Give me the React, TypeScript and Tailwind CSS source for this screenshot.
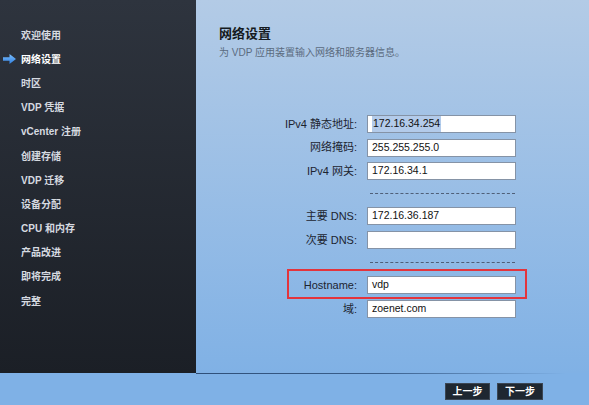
import React from "react";

const FONT = {
  fontFamily: '"Liberation Sans", Arial, "Noto Sans CJK SC", sans-serif',
};

const steps = [
  "欢迎使用",
  "网络设置",
  "时区",
  "VDP 凭据",
  "vCenter 注册",
  "创建存储",
  "VDP 迁移",
  "设备分配",
  "CPU 和内存",
  "产品改进",
  "即将完成",
  "完整",
];

function Arrow() {
  return (
    <svg width="13" height="10" viewBox="0 0 13 10" className="absolute left-[3px] top-[7px]">
      <defs>
        <linearGradient id="arr" x1="0" y1="0" x2="0" y2="1">
          <stop offset="0" stopColor="#7cc0ff" />
          <stop offset="1" stopColor="#2f7fe0" />
        </linearGradient>
      </defs>
      <path d="M0 3.2 H6.5 V0 L13 5 L6.5 10 V6.8 H0 Z" fill="url(#arr)" />
    </svg>
  );
}

function Sidebar() {
  return (
    <div className="w-[196px] h-full bg-gradient-to-b from-[#2e343e] to-[#1b1f26] pt-[23px]">
      {steps.map((s, i) => (
        <div key={s} className="relative h-[24.2px] flex items-center pl-[21px]">
          {i === 1 && <Arrow />}
          <span
            className={
              i === 1
                ? "text-[10px] font-bold text-white"
                : "text-[10px] font-bold text-[#d6dae0]"
            }
          >
            {s}
          </span>
        </div>
      ))}
    </div>
  );
}

function Field({
  label,
  value,
  selected,
}: {
  label: string;
  value: string;
  selected?: boolean;
}) {
  return (
    <div className="flex items-center h-[18px]">
      <div className="w-[171px] pr-[10px] text-right text-[11px] text-[#1c2430]">{label}</div>
      <div className="w-[149px] h-[18px] bg-white border border-[#8593a6] flex items-center pl-[4px] text-[10.5px] text-[#111]">
        {selected ? <span className="bg-[#b3cbea] px-[1px]">{value}</span> : value}
      </div>
    </div>
  );
}

function Divider() {
  return (
    <div className="h-[27px] flex items-center">
      <div className="ml-[174px] w-[145px] border-t border-dashed border-[#4f5f78]" />
    </div>
  );
}

function Main() {
  return (
    <div className="flex-1 h-full bg-gradient-to-b from-[#b3cbe6] to-[#80b1e5] flex flex-col">
      <div className="h-[115px] pl-[23px] pt-[25px]">
        <div className="text-[13px] font-bold text-[#151a20] leading-[18px]">网络设置</div>
        <div className="mt-[3px] text-[10px] text-[#5b6b7e] leading-[14px]">为 VDP 应用装置输入网络和服务器信息。</div>
      </div>
      <div className="flex flex-col">
        <div className="flex flex-col gap-[5.5px]">
          <Field label="IPv4 静态地址:" value="172.16.34.254" selected />
          <Field label="网络掩码:" value="255.255.255.0" />
          <Field label="IPv4 网关:" value="172.16.34.1" />
        </div>
        <Divider />
        <div className="flex flex-col gap-[6px]">
          <Field label="主要 DNS:" value="172.16.36.187" />
          <Field label="次要 DNS:" value="" />
        </div>
        <Divider />
        <div className="flex flex-col gap-[6px]">
          <div className="relative">
            <Field label="Hostname:" value="vdp" />
            <div className="absolute left-[91px] top-[-7px] w-[240px] h-[30px] border-2 border-[#e3343c]" />
          </div>
          <Field label="域:" value="zoenet.com" />
        </div>
      </div>
    </div>
  );
}

export default function App() {
  return (
    <div style={FONT} className="w-[589px] h-[405px] flex flex-col bg-[#7fb1e6] overflow-hidden">
      <div className="h-[373px] flex">
        <Sidebar />
        <Main />
      </div>
      <div className="h-[32px] flex flex-col">
        <div className="flex h-px">
          <div className="w-[196px]" />
          <div className="w-[370px] h-px bg-gradient-to-r from-[#2f4f78] via-[#3a5f8c] to-transparent" />
        </div>
        <div className="flex justify-end gap-[7px] pr-[46px] mt-[9px]">
          <button className="w-[45px] h-[17px] bg-[#1e2731] border border-[#3b4654] text-white text-[10px] font-bold leading-none">
            上一步
          </button>
          <button className="w-[46px] h-[17px] bg-[#1e2731] border border-[#3b4654] text-white text-[10px] font-bold leading-none">
            下一步
          </button>
        </div>
      </div>
    </div>
  );
}
